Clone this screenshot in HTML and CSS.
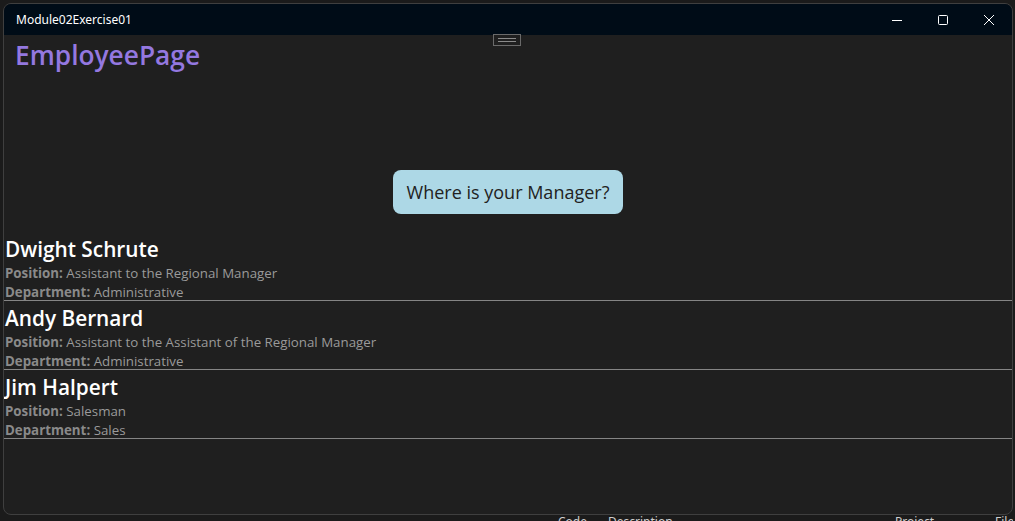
FILE: index.html
```html
<!DOCTYPE html>
<html>
<head>
<meta charset="utf-8">
<link rel="stylesheet" href="styles.css">
</head>
<body>
<div class="desk">
  <div class="window">
    <div class="titlebar">
      <span class="apptitle">Module02Exercise01</span>
      <div class="controls">
        <div class="ctl"><svg width="10" height="10" viewBox="0 0 10 10"><path d="M0 5.5H10" stroke="#fff" stroke-width="1"/></svg></div>
        <div class="ctl"><svg width="10" height="10" viewBox="0 0 10 10"><rect x="0.5" y="0.5" width="9" height="9" rx="1" fill="none" stroke="#fff" stroke-width="1"/></svg></div>
        <div class="ctl"><svg width="10" height="10" viewBox="0 0 10 10"><path d="M0 0L10 10M10 0L0 10" stroke="#fff" stroke-width="1"/></svg></div>
      </div>
    </div>
    <div class="content">
      <div class="hotbar"><span></span><span></span></div>
      <div class="navtitle">EmployeePage</div>
      <div class="page">
        <button class="btn">Where is your Manager?</button>
        <div class="list">
          <div class="item">
            <div class="name">Dwight Schrute</div>
            <div class="line"><b>Position:</b> Assistant to the Regional Manager</div>
            <div class="line"><b>Department:</b> Administrative</div>
          </div>
          <div class="item">
            <div class="name">Andy Bernard</div>
            <div class="line"><b>Position:</b> Assistant to the Assistant of the Regional Manager</div>
            <div class="line"><b>Department:</b> Administrative</div>
          </div>
          <div class="item">
            <div class="name">Jim Halpert</div>
            <div class="line"><b>Position:</b> Salesman</div>
            <div class="line"><b>Department:</b> Sales</div>
          </div>
        </div>
      </div>
    </div>
  </div>
  <div class="behind">
    <span class="c1">Code</span><span class="c2">Description</span><span class="c3">Project</span><span class="c4">File</span>
  </div>
</div>
</body>
</html>
```
FILE: styles.css
```css
html, body {
  margin: 0;
  padding: 0;
  background: #1b1b1b;
  width: 1015px;
  height: 521px;
  overflow: hidden;
}
.desk {
  padding: 3px 2px 0 3px;
  display: flex;
  flex-direction: column;
}
.window {
  width: 1008px;
  height: 510px;
  border: 1px solid #3f3f3f;
  border-radius: 8px;
  overflow: hidden;
  background: #1f1f1f;
  display: flex;
  flex-direction: column;
}
.titlebar {
  height: 31px;
  background: #000c17;
  display: flex;
  align-items: center;
  flex-shrink: 0;
}
.apptitle {
  font-family: "Noto Sans", sans-serif;
  font-size: 12px;
  color: #ffffff;
  padding-left: 12px;
  margin-top: -1px;
}
.controls {
  margin-left: auto;
  display: flex;
  height: 100%;
}
.ctl {
  width: 46px;
  display: flex;
  align-items: center;
  justify-content: center;
}
.content {
  position: relative;
  flex: 1;
  display: flex;
  flex-direction: column;
}
.hotbar {
  position: absolute;
  left: 489px;
  top: -1px;
  width: 26px;
  height: 10px;
  border: 1px solid #6a6a6a;
  display: flex;
  flex-direction: column;
  align-items: center;
  justify-content: center;
  gap: 2px;
}
.hotbar span {
  display: block;
  width: 18px;
  height: 1px;
  background: #8a8a8a;
}
.navtitle {
  font-family: "Open Sans", sans-serif;
  font-weight: 600;
  font-size: 26.3px;
  color: #9478e0;
  line-height: 40px;
  padding-left: 11px;
  height: 40px;
}
.page {
  display: flex;
  flex-direction: column;
}
.btn {
  align-self: center;
  margin-top: 95px;
  height: 44px;
  padding: 0 14px;
  background: #add8e6;
  border: none;
  border-radius: 8px;
  font-family: "Open Sans", sans-serif;
  font-size: 18px;
  color: #222222;
}
.list {
  margin-top: 18px;
  display: flex;
  flex-direction: column;
}
.item {
  border-bottom: 1px solid #858585;
  padding-left: 1px;
  font-family: "Open Sans", sans-serif;
}
.name {
  font-size: 20.8px;
  font-weight: 600;
  color: #ffffff;
  line-height: 34px;
  height: 30px;
}
.line {
  font-size: 13.3px;
  line-height: 22px;
  height: 19px;
  color: #9a9a9a;
}
.line b {
  color: #8a8a8a;
  font-weight: 700;
}
.behind {
  height: 6px;
  overflow: hidden;
  position: relative;
  font-family: "Noto Sans", sans-serif;
  font-size: 12px;
  color: #cfcfcf;
  line-height: 14px;
}
.behind span {
  position: absolute;
  top: 0;
}
.c1 { left: 555px; }
.c2 { left: 605px; }
.c3 { left: 892px; }
.c4 { left: 992px; }
```
